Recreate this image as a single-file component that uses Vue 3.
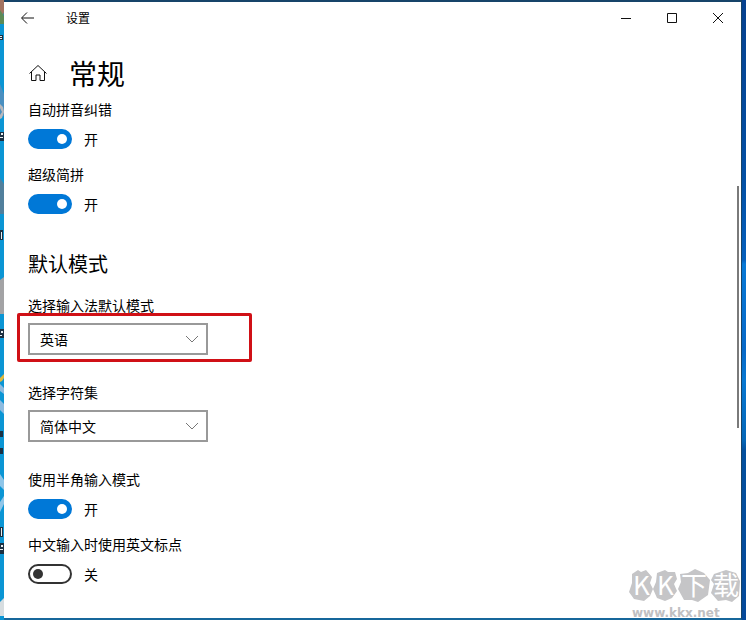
<script setup>
import { reactive } from 'vue'

const correction = reactive([
  { id: 'autocorrect', label: '自动拼音纠错', on: true },
  { id: 'abbreviated', label: '超级简拼', on: true },
])
const selects = reactive([
  { id: 'mode', label: '选择输入法默认模式', value: '英语', options: ['英语', '中文'], marked: true },
  { id: 'charset', label: '选择字符集', value: '简体中文', options: ['简体中文', '繁体中文'], marked: false },
])
const input = reactive([
  { id: 'halfwidth', label: '使用半角输入模式', on: true },
  { id: 'punctuation', label: '中文输入时使用英文标点', on: false },
])
</script>

<template>
  <div class="desktop">
    <svg class="wallpaper" viewBox="0 0 4 620" preserveAspectRatio="none" aria-hidden="true">
      <rect width="4" height="620" fill="#0b95d4" />
      <path d="M0 0H4V12L2 20L0 24Z" fill="#a37361" />
      <path d="M0 10L4 16V24H0Z" fill="#5d8a56" />
      <path d="M0 84L4 94V116H0Z" fill="#4a8fc0" />
      <path d="M0 104L3 107L4 112L2 118L0 119V115L2 112L0 108Z" fill="#b8b8bc" />
      <path d="M0 178L4 184V214H0Z" fill="#517f9c" />
      <path d="M0 280L4 277V314H0Z" fill="#a3a3a5" />
      <path d="M0 378L4 374V378L2 381L0 382Z" fill="#e0b83c" />
      <path d="M0 384L4 388V394L0 391ZM0 400L4 404V414L0 410Z" fill="#8dbbe0" />
      <path d="M0 474L4 480V490L0 486ZM0 502L4 496V504L0 512Z" fill="#8fc5e8" />
      <path d="M0 602L4 598V616H0Z" fill="#d7dde0" />
      <path d="M0 35H3V40H0ZM0 132H4V141H0ZM0 230H3V240H0ZM0 329H4V338H0ZM0 431H3V437H0ZM0 448H3V454H0ZM0 527H3V537H0ZM0 543H4V554H0Z" fill="#1c3042" />
      <path d="M0 36H2V37H1V38H2V39H0V38H1V37H0ZM1 133H3V135H1ZM0 137H3V138H0ZM1 232H2V239H1ZM1 331H3V333H1ZM0 335H2V336H0ZM1 528H2V536H1ZM1 545H3V547H1ZM0 549H3V550H0Z" fill="#e7edf0" />
    </svg>

    <main class="window">
      <header class="titlebar">
        <button class="icon-button back" type="button" aria-label="返回">
          <svg width="14" height="12" viewBox="0 0 14 12"><path d="M13 6H1M6 0.500L0.500 6l5.500 5.500" /></svg>
        </button>
        <span class="title">设置</span>
        <div class="controls">
          <button class="icon-button" type="button" aria-label="最小化">
            <svg width="12" height="12" viewBox="0 0 12 12"><path d="M1 6.500H11" /></svg>
          </button>
          <button class="icon-button" type="button" aria-label="最大化">
            <svg width="12" height="12" viewBox="0 0 12 12"><path d="M1.500 1.500H10.500V10.500H1.500Z" /></svg>
          </button>
          <button class="icon-button" type="button" aria-label="关闭">
            <svg width="12" height="12" viewBox="0 0 12 12"><path d="M1 1L11 11M11 1L1 11" /></svg>
          </button>
        </div>
      </header>

      <section class="content">
        <div class="heading">
          <button class="icon-button home" type="button" aria-label="主页">
            <svg width="20" height="18" viewBox="0 0 20 18"><path d="M1.500 9.500L10 1.500L18.500 9.500M3.500 8V16.500H8V11H12V16.500H16.500V8" /></svg>
          </button>
          <h1>常规</h1>
        </div>

        <div v-for="item in correction" :key="item.id" class="setting">
          <label :for="item.id">{{ item.label }}</label>
          <div class="switch-row">
            <input :id="item.id" v-model="item.on" class="switch" type="checkbox" role="switch">
            <span>{{ item.on ? '开' : '关' }}</span>
          </div>
        </div>

        <h2>默认模式</h2>

        <div v-for="item in selects" :key="item.id" class="choice">
          <label :for="item.id">{{ item.label }}</label>
          <div class="select-box" :class="{ marked: item.marked }">
            <select :id="item.id" v-model="item.value">
              <option v-for="option in item.options" :key="option">{{ option }}</option>
            </select>
            <svg class="chevron" width="14" height="8" viewBox="0 0 14 8"><path d="M1 1L7 7L13 1" /></svg>
          </div>
        </div>

        <div v-for="item in input" :key="item.id" class="setting">
          <label :for="item.id">{{ item.label }}</label>
          <div class="switch-row">
            <input :id="item.id" v-model="item.on" class="switch" type="checkbox" role="switch">
            <span>{{ item.on ? '开' : '关' }}</span>
          </div>
        </div>
      </section>

      <div class="scrollbar"></div>
    </main>

    <div class="watermark">
      <svg width="112" height="36" viewBox="0 0 112 36">
        <g fill="#c5c5c7">
          <path d="M3 5L9 1L12 3L17 1L23 8L21 14L24 20L21 27L15 32L5 30L0 23L3 14Z" />
          <path d="M28 4L36 1L39 3L46 3L48 10L45 15L48 22L43 29L36 32L28 29L24 20L27 13Z" />
          <path d="M51 5L59 4L66 0L75 4L81 11L79 26L69 33L63 31L55 31L49 20L52 13Z" />
          <path d="M85 5L97 1L107 4L111 12L110 27L103 33L97 31L89 32L82 24L85 15L82 11Z" />
        </g>
        <g class="brand">
          <text x="4" y="26">K</text><text x="28" y="26">K</text>
          <text x="52" y="26">下</text><text x="84" y="26">载</text>
        </g>
      </svg>
      <span class="site">www.kkx.net</span>
    </div>
  </div>
</template>

<style>
body {
  margin: 0;
}
</style>

<style scoped>
.desktop {
  position: relative;
  box-sizing: border-box;
  min-height: 100vh;
  display: grid;
  grid-template-columns: 4px 1fr;
  padding: 0 4px 1px 0;
  background: linear-gradient(#06418f 0, #0350a5 180px, #0660bd 260px, #0879d6 264px, #0869c8 350px, #0878d2 380px, #0567b8 440px, #04509e 450px, #05499a 100%);
  color: #000;
  font: 14px/20px "Noto Sans CJK SC", sans-serif;
}
.wallpaper {
  width: 4px;
  height: 100%;
}
.window {
  display: flex;
  flex-direction: column;
  box-sizing: border-box;
  border: solid #164469;
  border-width: 2px 1px 2px 0;
  border-bottom-color: #17679b;
  background: #fff;
}
.titlebar {
  display: flex;
  align-items: center;
  height: 32px;
  padding-left: 8px;
  font-size: 12px;
}
.icon-button {
  display: grid;
  place-items: center;
  padding: 0;
  border: 0;
  background: none;
}
.icon-button svg,
.chevron {
  fill: none;
  stroke: #111;
}
.back {
  width: 32px;
  height: 32px;
}
.title {
  margin-left: 22px;
}
.controls {
  display: flex;
  margin-left: auto;
}
.controls .icon-button {
  width: 46px;
  height: 32px;
}
.content {
  padding: 15px 24px 16px;
}
.heading {
  display: flex;
  align-items: center;
  gap: 21px;
  height: 48px;
  margin-bottom: 2px;
}
h1,
h2 {
  margin: 0;
  font-weight: 400;
}
h1 {
  font-size: 28px;
  line-height: 40px;
}
h2 {
  margin: 21px 0 17px;
  font-size: 20px;
  line-height: 28px;
}
.setting {
  height: 65px;
}
.setting label,
.choice label {
  display: block;
}
.switch-row {
  display: flex;
  align-items: center;
  gap: 12px;
  margin-top: 10px;
}
.switch {
  appearance: none;
  display: flex;
  align-items: center;
  box-sizing: border-box;
  width: 44px;
  height: 20px;
  margin: 0;
  padding: 0 3px;
  border: 2px solid #333;
  border-radius: 10px;
  background: #fff;
}
.switch::before {
  content: "";
  width: 10px;
  height: 10px;
  border-radius: 50%;
  background: #333;
}
.switch:checked {
  justify-content: flex-end;
  border-color: #0078d7;
  background: #0078d7;
}
.switch:checked::before {
  background: #fff;
}
.choice {
  height: 87px;
}
.select-box {
  position: relative;
  width: 180px;
  margin-top: 8px;
}
select {
  appearance: none;
  display: block;
  box-sizing: border-box;
  width: 100%;
  height: 32px;
  padding: 0 30px 0 10px;
  border: 2px solid #999;
  border-radius: 0;
  background: #fff;
  color: #000;
  font: inherit;
}
.chevron {
  position: absolute;
  top: 12px;
  right: 9px;
  stroke: #777;
  pointer-events: none;
}
.marked::after {
  content: "";
  position: absolute;
  inset: -10px -44px -7px -11px;
  border: 3px solid #d01016;
  border-radius: 2px;
  pointer-events: none;
}
.scrollbar {
  position: absolute;
  top: 30%;
  right: 7px;
  width: 2px;
  height: 39%;
  background: #7a7a7a;
}
.watermark {
  position: absolute;
  right: 5px;
  bottom: 0;
  display: flex;
  flex-direction: column;
  width: 112px;
  color: #c0c0c2;
  font: bold 12px/16px "DejaVu Sans", sans-serif;
}
.watermark svg {
  overflow: visible;
}
.site {
  padding-left: 3px;
}
.brand {
  fill: #fff;
  font: 26px/36px "Noto Sans CJK SC", sans-serif;
}
</style>
